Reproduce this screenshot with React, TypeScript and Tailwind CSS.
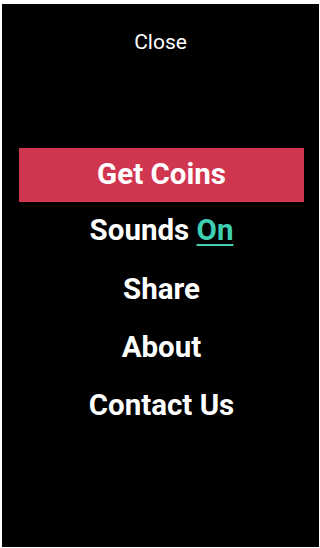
import React from "react";

export default function App() {
  return (
    <div className="w-[320px] h-[548px] bg-white pt-[4px] pl-[2px] pr-[1px] pb-[1px]" style={{ fontFamily: "Roboto, 'Noto Sans', sans-serif" }}>
      <div className="h-full bg-black flex flex-col items-stretch">
        <div className="h-[76px] flex items-center justify-center text-white text-[21px] leading-none">Close</div>
        <div className="h-[68px]" />
        <div className="flex flex-col pl-[17px] pr-[15px]">
          <div className="h-[54px] bg-[#d13650] flex items-center justify-center text-white font-bold text-[29.5px] leading-none">Get Coins</div>
          <div className="h-[58px] flex items-center justify-center text-white font-bold text-[29.5px] leading-none">
            Sounds&nbsp;<span className="text-[#3fcfb3] underline decoration-[2px] underline-offset-[4px]">On</span>
          </div>
          <div className="h-[59px] flex items-center justify-center text-white font-bold text-[29.5px] leading-none">Share</div>
          <div className="h-[58px] flex items-center justify-center text-white font-bold text-[29.5px] leading-none">About</div>
          <div className="h-[58px] flex items-center justify-center text-white font-bold text-[29.5px] leading-none">Contact Us</div>
        </div>
      </div>
    </div>
  );
}
